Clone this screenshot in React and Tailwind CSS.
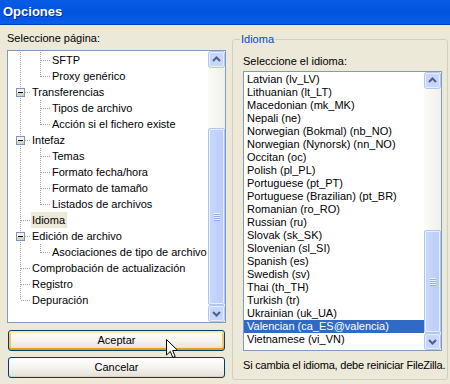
import React from 'react';

const treeRows = [
  { label: 'SFTP', level: 1, l1: 'full' },
  { label: 'Proxy genérico', level: 1, l1: 'half' },
  { label: 'Transferencias', level: 0, box: true },
  { label: 'Tipos de archivo', level: 1, l1: 'full' },
  { label: 'Acción si el fichero existe', level: 1, l1: 'half' },
  { label: 'Intefaz', level: 0, box: true },
  { label: 'Temas', level: 1, l1: 'full' },
  { label: 'Formato fecha/hora', level: 1, l1: 'full' },
  { label: 'Formato de tamaño', level: 1, l1: 'full' },
  { label: 'Listados de archivos', level: 1, l1: 'half' },
  { label: 'Idioma', level: 0, selected: true },
  { label: 'Edición de archivo', level: 0, box: true },
  { label: 'Asociaciones de tipo de archivo', level: 1, l1: 'half' },
  { label: 'Comprobación de actualización', level: 0 },
  { label: 'Registro', level: 0 },
  { label: 'Depuración', level: 0, last: true },
];

const languages = [
  'Latvian (lv_LV)',
  'Lithuanian (lt_LT)',
  'Macedonian (mk_MK)',
  'Nepali (ne)',
  'Norwegian (Bokmal) (nb_NO)',
  'Norwegian (Nynorsk) (nn_NO)',
  'Occitan (oc)',
  'Polish (pl_PL)',
  'Portuguese (pt_PT)',
  'Portuguese (Brazilian) (pt_BR)',
  'Romanian (ro_RO)',
  'Russian (ru)',
  'Slovak (sk_SK)',
  'Slovenian (sl_SI)',
  'Spanish (es)',
  'Swedish (sv)',
  'Thai (th_TH)',
  'Turkish (tr)',
  'Ukrainian (uk_UA)',
  'Valencian (ca_ES@valencia)',
  'Vietnamese (vi_VN)',
];

const DOT = '#a0a0a0';

// connector lines for one tree row, drawn in a 16px tall gutter
function Gutter({ row }) {
  const w = row.level === 0 ? 23 : 43;
  const rootX = 12.5;
  const l1X = 32.5;
  return (
    <svg width={w} height="16" className="shrink-0" shapeRendering="crispEdges">
      <line
        x1={rootX}
        y1="0"
        x2={rootX}
        y2={row.last ? 8 : 16}
        stroke={DOT}
        strokeDasharray="1 1"
      />
      {row.level === 0 && (
        <line x1={rootX} y1="8.5" x2="22" y2="8.5" stroke={DOT} strokeDasharray="1 1" />
      )}
      {row.level === 1 && (
        <>
          <line
            x1={l1X}
            y1="0"
            x2={l1X}
            y2={row.l1 === 'half' ? 9 : 16}
            stroke={DOT}
            strokeDasharray="1 1"
          />
          <line x1={l1X} y1="8.5" x2="42" y2="8.5" stroke={DOT} strokeDasharray="1 1" />
        </>
      )}
      {row.box && (
        <g>
          <rect x="8.5" y="4.5" width="8" height="8" fill="#f4f3ee" stroke="#7a96b3" />
          <rect x="9" y="9" width="7" height="3" fill="#d8d5c7" />
          <line x1="10" y1="8.5" x2="15" y2="8.5" stroke="#000" />
        </g>
      )}
    </svg>
  );
}

function ScrollButton({ dir }) {
  const pts = dir === 'up' ? '5,10 8.5,6.5 12,10' : '5,7 8.5,10.5 12,7';
  return (
    <svg width="17" height="17" className="shrink-0 block">
      <rect x="0.5" y="0.5" width="16" height="16" rx="2" fill="#c6d6fc" stroke="#b3c6f2" />
      <rect x="1.5" y="1.5" width="14" height="14" rx="1.5" fill="none" stroke="#e6eefe" />
      <polyline points={pts} fill="none" stroke="#4d6185" strokeWidth="2" />
    </svg>
  );
}

function Grip() {
  return (
    <svg width="8" height="8" className="block">
      <line x1="1" y1="0.5" x2="7" y2="0.5" stroke="#eef3fe" />
      <line x1="1" y1="1.5" x2="7" y2="1.5" stroke="#8cacf0" />
      <line x1="1" y1="2.5" x2="7" y2="2.5" stroke="#eef3fe" />
      <line x1="1" y1="3.5" x2="7" y2="3.5" stroke="#8cacf0" />
      <line x1="1" y1="4.5" x2="7" y2="4.5" stroke="#eef3fe" />
      <line x1="1" y1="5.5" x2="7" y2="5.5" stroke="#8cacf0" />
      <line x1="1" y1="6.5" x2="7" y2="6.5" stroke="#eef3fe" />
      <line x1="1" y1="7.5" x2="7" y2="7.5" stroke="#8cacf0" />
    </svg>
  );
}

function ScrollBar({ thumb }) {
  return (
    <div className="w-[17px] flex flex-col shrink-0">
      <ScrollButton dir="up" />
      <div className="flex-1 flex flex-col justify-end bg-gradient-to-r from-[#fbfbf8] to-[#f1f0ea]">
        <div
          className="w-[17px] rounded-[2px] border border-[#b2c5f1] bg-gradient-to-r from-[#cad9fd] to-[#b9ccf8] flex items-center justify-center shadow-[inset_0_0_0_1px_#e8effe]"
          style={{ height: thumb }}
        >
          <Grip />
        </div>
      </div>
      <ScrollButton dir="down" />
    </div>
  );
}

function XPButton({ children, focused }) {
  return (
    <button
      className={
        'h-[21px] mx-[1px] rounded-[3px] border border-[#003c74] bg-gradient-to-b from-[#ffffff] via-[#f5f4ef] to-[#e3e0d6] text-[11px] text-black flex items-center justify-center ' +
        (focused
          ? 'shadow-[inset_0_2px_0_#ffe8a8,inset_0_-2px_0_#e5a01a,inset_2px_0_0_#f8c460,inset_-2px_0_0_#f8c460]'
          : 'shadow-[inset_0_-1px_0_#d6d0c5]')
      }
    >
      {children}
    </button>
  );
}

export default function App() {
  return (
    <div className="w-[450px] h-[384px] overflow-hidden bg-[#ece9d8] flex flex-col font-['Liberation_Sans',Arial,sans-serif] text-[11px] text-black">
      <div className="h-[25px] shrink-0 bg-gradient-to-b from-[#0a5ce6] via-[#0054e0] to-[#0a5de8] border-b border-[#0040c0] flex items-center pl-[3px]">
        <span className="text-white font-bold text-[13px] [text-shadow:1px_1px_0_#0a2a8a]">Opciones</span>
      </div>

      <div className="flex pt-[7px]">
        <div className="w-[220px] ml-[7px] flex flex-col shrink-0">
          <div className="h-[13px] leading-[13px]">Seleccione página:</div>

          <div className="mt-[5px] w-[219px] h-[273px] border border-[#7f9db9] bg-white flex">
            <div className="flex-1 pt-[1px] overflow-hidden">
              {treeRows.map((row) => (
                <div key={row.label} className="h-[16px] flex items-center whitespace-nowrap">
                  <Gutter row={row} />
                  <span
                    className={
                      'pl-[1px] pr-[2px] h-[16px] leading-[16px] ' +
                      (row.selected ? 'bg-[#ece9d8]' : '')
                    }
                  >
                    {row.label}
                  </span>
                </div>
              ))}
            </div>
            <ScrollBar thumb={177} />
          </div>

          <div className="mt-[7px] flex flex-col gap-[6px] w-[219px]">
            <div className="relative flex flex-col">
              <XPButton focused>Aceptar</XPButton>
              <svg
                width="13"
                height="20"
                viewBox="0 0 13 20"
                className="absolute left-[159px] top-[9px]"
              >
                <path
                  d="M0.5 0.5 L0.5 16 L4.3 12.4 L6.8 18.5 L9.2 17.5 L6.7 11.5 L11.7 11.5 Z"
                  fill="#fff"
                  stroke="#000"
                  strokeWidth="1"
                  strokeLinejoin="miter"
                />
              </svg>
            </div>
            <XPButton>Cancelar</XPButton>
          </div>
        </div>

        <div className="relative ml-[5px] mt-[7px] w-[216px] h-[341px] shrink-0 rounded-[3px] border border-[#d0d0bf] pl-[10px] pt-[15px]">
          <span className="absolute left-[7px] top-[-7px] px-[1px] h-[13px] leading-[13px] bg-[#ece9d8] text-[#0046d5]">
            Idioma
          </span>
          <div className="h-[13px] leading-[13px]">Seleccione el idioma:</div>
          <div className="mt-[3px] w-[199px] h-[280px] border border-[#7f9db9] bg-white flex">
            <div className="flex-1 pt-[1px] overflow-hidden">
              {languages.map((lang) => (
                <div
                  key={lang}
                  className={
                    'h-[13px] leading-[13px] pl-[3px] whitespace-nowrap ' +
                    (lang.startsWith('Valencian') ? 'bg-[#316ac5] text-white' : '')
                  }
                >
                  {lang}
                </div>
              ))}
            </div>
            <ScrollBar thumb={103} />
          </div>
          <div className="mt-[8px] h-[13px] leading-[13px] whitespace-nowrap tracking-[-0.2px]">
            Si cambia el idioma, debe reiniciar FileZilla.
          </div>
        </div>
      </div>
    </div>
  );
}
